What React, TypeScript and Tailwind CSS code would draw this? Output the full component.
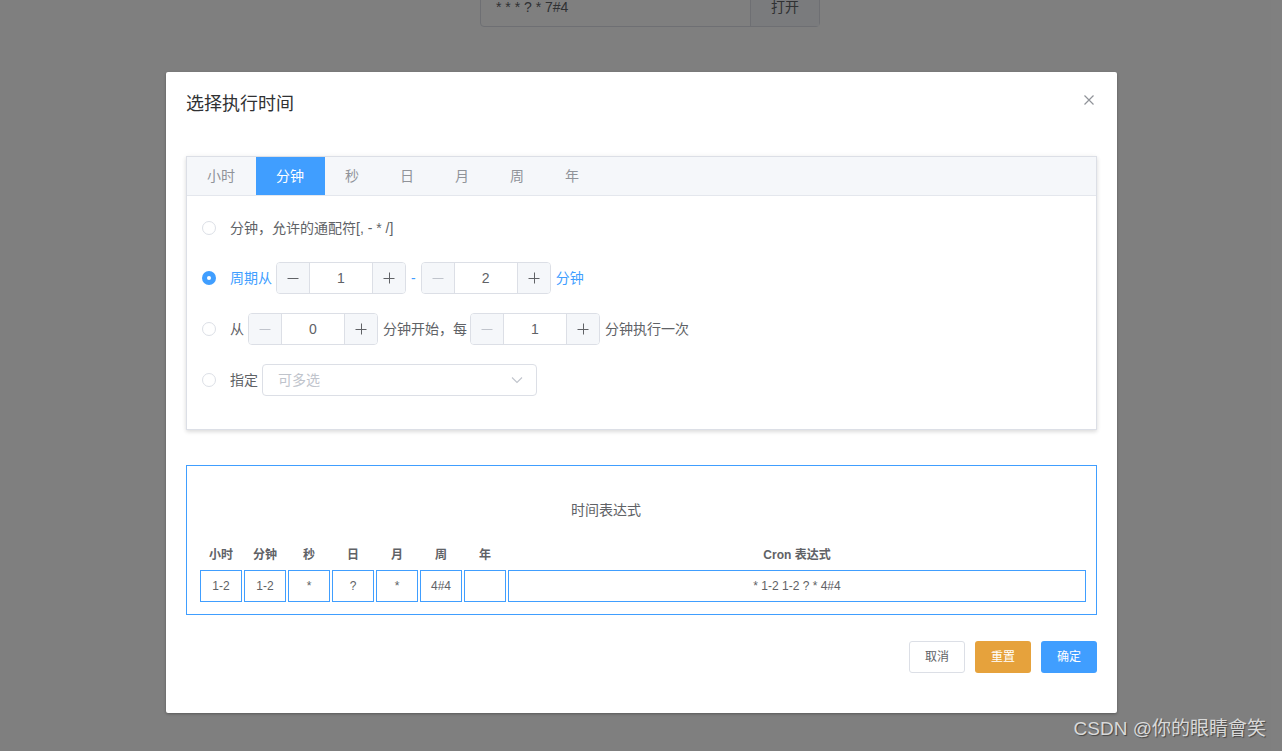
import { useState } from "react";

const FONT = '"Liberation Sans", "Noto Sans CJK SC", sans-serif';

const tabs = ["小时", "分钟", "秒", "日", "月", "周", "年"];

const cells = [
  { label: "小时", value: "1-2" },
  { label: "分钟", value: "1-2" },
  { label: "秒", value: "*" },
  { label: "日", value: "?" },
  { label: "月", value: "*" },
  { label: "周", value: "4#4" },
  { label: "年", value: "" },
];

type NumberBoxProps = {
  value: number;
  minusDisabled?: boolean;
};

function NumberBox({ value, minusDisabled }: NumberBoxProps) {
  return (
    <div className="flex h-8 w-[130px] overflow-hidden rounded border border-[#dcdfe6] bg-white">
      <span className="flex w-[33px] items-center justify-center border-r border-[#dcdfe6] bg-[#f5f7fa]">
        <svg width="12" height="12" viewBox="0 0 12 12">
          <path d="M0.5 6.5H11.5" stroke={minusDisabled ? "#c0c4cc" : "#606266"} strokeWidth="1" />
        </svg>
      </span>
      <span className="flex flex-1 items-center justify-center text-sm text-[#606266]">{value}</span>
      <span className="flex w-[33px] items-center justify-center border-l border-[#dcdfe6] bg-[#f5f7fa]">
        <svg width="12" height="12" viewBox="0 0 12 12">
          <path d="M0.5 6.5H11.5M6.5 0.5V11.5" stroke="#606266" strokeWidth="1" />
        </svg>
      </span>
    </div>
  );
}

function Radio({ checked }: { checked?: boolean }) {
  if (checked) {
    return (
      <span className="mr-[14px] flex h-[14px] w-[14px] shrink-0 items-center justify-center rounded-full bg-[#409eff]">
        <span className="h-1 w-1 rounded-full bg-white" />
      </span>
    );
  }
  return <span className="mr-[14px] h-[14px] w-[14px] shrink-0 rounded-full border border-[#dcdfe6] bg-white" />;
}

export default function App() {
  const [activeTab, setActiveTab] = useState(1);

  return (
    <div className="relative h-[751px] w-full overflow-hidden bg-white" style={{ fontFamily: FONT }}>
      {/* page under the mask */}
      <div className="flex justify-center pl-[18px]">
        <div className="-mt-[13px] flex h-10 w-[340px] rounded border border-[#dcdfe6]">
          <div className="flex flex-1 items-center px-[15px] text-sm text-[#606266]">* * * ? * 7#4</div>
          <div className="flex w-[69px] items-center justify-center border-l border-[#dcdfe6] bg-[#f5f7fa] text-sm text-[#606266]">
            打开
          </div>
        </div>
      </div>

      {/* mask + dialog */}
      <div className="absolute inset-0 bg-black/50">
        <div className="ml-[166px] mt-[72px] h-[641px] w-[951px] rounded-[2px] bg-white shadow-[0_1px_3px_rgba(0,0,0,0.3)]">
          <div className="flex items-start justify-between px-5 pb-[10px] pt-5">
            <span className="text-[18px] leading-6 text-[#303133]">选择执行时间</span>
            <svg width="10" height="10" viewBox="0 0 10 10" className="mr-[3px] mt-[3px]">
              <path d="M0.5 0.5L9.5 9.5M9.5 0.5L0.5 9.5" stroke="#909399" strokeWidth="1.2" />
            </svg>
          </div>

          <div className="px-5 pt-[30px]">
            {/* tabs card */}
            <div className="border border-[#dcdfe6] bg-white shadow-[0_2px_4px_rgba(0,0,0,0.12),0_0_6px_rgba(0,0,0,0.04)]">
              <div className="flex h-[39px] border-b border-[#e4e7ed] bg-[#f5f7fa]">
                {tabs.map((tab, index) => (
                  <button
                    key={tab}
                    type="button"
                    onClick={() => setActiveTab(index)}
                    className={`flex items-center border-r border-transparent px-5 text-sm ${
                      activeTab === index ? "bg-[#409eff] text-white" : "text-[#909399]"
                    }`}
                  >
                    {tab}
                  </button>
                ))}
              </div>

              <div className="flex flex-col px-[15px] pb-[33px] pt-4 text-sm text-[#606266]">
                <div className="flex h-8 items-center">
                  <Radio />
                  <span>分钟，允许的通配符[, - * /]</span>
                </div>

                <div className="mt-[18px] flex h-8 items-center text-[#409eff]">
                  <Radio checked />
                  <span className="mr-1">周期从</span>
                  <NumberBox value={1} />
                  <span className="mx-[5px]">-</span>
                  <NumberBox value={2} minusDisabled />
                  <span className="ml-[5px]">分钟</span>
                </div>

                <div className="mt-[19px] flex h-8 items-center">
                  <Radio />
                  <span className="mr-[4px]">从</span>
                  <NumberBox value={0} minusDisabled />
                  <span className="ml-[5px] mr-[3px]">分钟开始，每</span>
                  <NumberBox value={1} minusDisabled />
                  <span className="ml-[5px]">分钟执行一次</span>
                </div>

                <div className="mt-[19px] flex h-8 items-center">
                  <Radio />
                  <span className="mr-1">指定</span>
                  <div className="flex h-8 w-[275px] items-center justify-between rounded border border-[#dcdfe6] px-[15px]">
                    <span className="text-[#c0c4cc]">可多选</span>
                    <svg width="12" height="8" viewBox="0 0 12 8" className="mr-[-2px]">
                      <path d="M1 1.5L6 6.5L11 1.5" fill="none" stroke="#c0c4cc" strokeWidth="1.1" />
                    </svg>
                  </div>
                </div>
              </div>
            </div>

            {/* expression */}
            <div className="mt-[35px] border border-[#409eff] pb-3 pl-[13px] pr-[10px] pt-[34px]">
              <div className="pl-[371px] text-sm leading-5 text-[#606266]">时间表达式</div>
              <div className="mt-[25px] grid grid-cols-[repeat(7,42px)_1fr] gap-x-[2px] gap-y-[5px] text-xs text-[#606266]">
                {cells.map((cell) => (
                  <div key={cell.label} className="text-center font-bold leading-5">
                    {cell.label}
                  </div>
                ))}
                <div className="text-center font-bold leading-5">Cron 表达式</div>
                {cells.map((cell) => (
                  <div
                    key={cell.label + "-v"}
                    className="flex h-8 items-center justify-center border border-[#409eff]"
                  >
                    {cell.value}
                  </div>
                ))}
                <div className="flex h-8 items-center justify-center border border-[#409eff]">
                  * 1-2 1-2 ? * 4#4
                </div>
              </div>
            </div>

            <div className="mt-[26px] flex justify-end gap-[10px] text-xs">
              <button type="button" className="h-8 w-14 rounded-[3px] border border-[#dcdfe6] bg-white text-[#606266]">
                取消
              </button>
              <button type="button" className="h-8 w-14 rounded-[3px] bg-[#e6a23c] text-white">
                重置
              </button>
              <button type="button" className="h-8 w-14 rounded-[3px] bg-[#409eff] text-white">
                确定
              </button>
            </div>
          </div>
        </div>
      </div>

      <div className="absolute bottom-[8px] right-[16px] text-[19px] text-[#d9d9d9] [text-shadow:1px_1px_1px_rgba(0,0,0,0.45)]">
        CSDN @你的眼睛會笑
      </div>
    </div>
  );
}
